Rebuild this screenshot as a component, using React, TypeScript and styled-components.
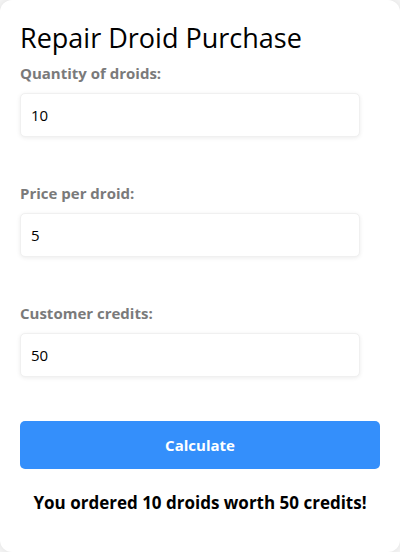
import React from "react";
import styled, { createGlobalStyle } from "styled-components";

const Global = createGlobalStyle`
  html, body { margin: 0; padding: 0; background: #f4f4f4; }
  body { font-family: "Open Sans", "Noto Sans", sans-serif; }
  * { box-sizing: border-box; }
`;

const Card = styled.div`
  width: 400px;
  height: 552px;
  background: #ffffff;
  border-radius: 12px;
  box-shadow: 0 0 6px rgba(0, 0, 0, 0.08);
  padding: 20px 20px;
  display: flex;
  flex-direction: column;
`;

const Title = styled.h1`
  margin: 0 0 7px 0;
  font-size: 27px;
  line-height: 36px;
  font-weight: 500;
  color: #000;
`;

const Field = styled.div`
  display: flex;
  flex-direction: column;
  margin-bottom: 46px;
`;

const Label = styled.label`
  font-size: 15px;
  line-height: 20px;
  font-weight: 700;
  color: #7a7a7a;
  margin-bottom: 10px;
`;

const Input = styled.input`
  width: 340px;
  height: 44px;
  border: 1px solid #f0f0f0;
  border-radius: 5px;
  box-shadow: 0 1px 4px rgba(0, 0, 0, 0.08);
  padding: 0 10px;
  font-family: inherit;
  font-size: 15px;
  color: #000;
  background: #fff;
  outline: none;
`;

const Button = styled.button`
  width: 360px;
  height: 48px;
  border: none;
  border-radius: 5px;
  background: #348ffb;
  color: #fff;
  font-family: inherit;
  font-size: 15px;
  font-weight: 700;
  margin-top: -2px;
  cursor: pointer;
`;

const Result = styled.p`
  margin: 22px 0 0 0;
  text-align: center;
  font-size: 17px;
  line-height: 24px;
  font-weight: 700;
  color: #000;
`;

export default function App() {
  return (
    <>
      <Global />
      <Card>
        <Title>Repair Droid Purchase</Title>
        <Field>
          <Label>Quantity of droids:</Label>
          <Input defaultValue="10" />
        </Field>
        <Field>
          <Label>Price per droid:</Label>
          <Input defaultValue="5" />
        </Field>
        <Field>
          <Label>Customer credits:</Label>
          <Input defaultValue="50" />
        </Field>
        <Button>Calculate</Button>
        <Result>You ordered 10 droids worth 50 credits!</Result>
      </Card>
    </>
  );
}
